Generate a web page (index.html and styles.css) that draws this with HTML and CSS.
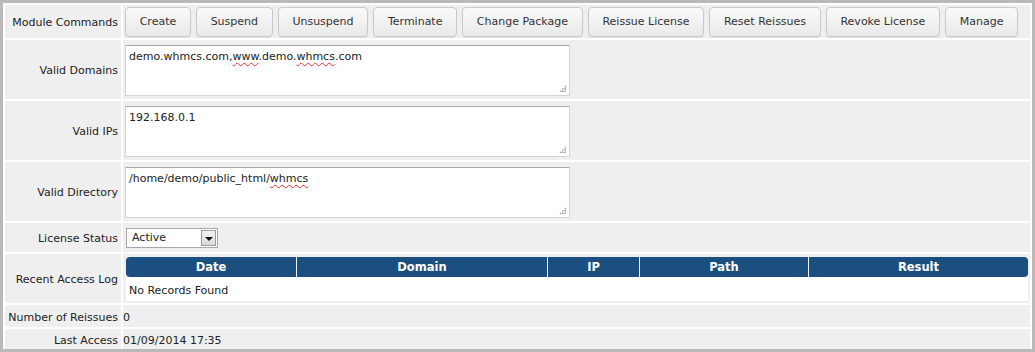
FILE: index.html
```html
<!DOCTYPE html>
<html lang="en">
<head>
  <meta charset="UTF-8" />
  <title>License Module</title>
  <link rel="stylesheet" href="styles.css">
</head>
<body>
  <div class="frame">
    <table class="form">
      <tr class="r-cmd">
        <td class="lbl">Module Commands</td>
        <td class="fld">
          <div class="cmds">
            <button>Create</button>
            <button>Suspend</button>
            <button>Unsuspend</button>
            <button>Terminate</button>
            <button>Change Package</button>
            <button>Reissue License</button>
            <button>Reset Reissues</button>
            <button>Revoke License</button>
            <button>Manage</button>
          </div>
        </td>
      </tr>
      <tr class="r-area">
        <td class="lbl">Valid Domains</td>
        <td class="fld"><div class="area">demo.whmcs.com,<span class="sp">www</span>.demo.<span class="sp">whmcs</span>.com<i class="grip"></i></div></td>
      </tr>
      <tr class="r-area">
        <td class="lbl">Valid IPs</td>
        <td class="fld"><div class="area">192.168.0.1<i class="grip"></i></div></td>
      </tr>
      <tr class="r-area">
        <td class="lbl">Valid Directory</td>
        <td class="fld"><div class="area">/home/demo/public_html/<span class="sp">whmcs</span><i class="grip"></i></div></td>
      </tr>
      <tr class="r-sel">
        <td class="lbl">License Status</td>
        <td class="fld">
          <div class="select"><span>Active</span><b class="arrow"></b></div>
        </td>
      </tr>
      <tr class="r-log">
        <td class="lbl">Recent Access Log</td>
        <td class="fld">
          <table class="log">
            <tr>
              <th class="c-date">Date</th>
              <th class="c-dom">Domain</th>
              <th class="c-ip">IP</th>
              <th class="c-path">Path</th>
              <th class="c-res">Result</th>
            </tr>
            <tr>
              <td colspan="5">No Records Found</td>
            </tr>
          </table>
        </td>
      </tr>
      <tr class="r-txt r-num">
        <td class="lbl">Number of Reissues</td>
        <td class="fld">0</td>
      </tr>
      <tr class="r-txt">
        <td class="lbl">Last Access</td>
        <td class="fld">01/09/2014 17:35</td>
      </tr>
    </table>
  </div>
</body>
</html>
```

FILE: styles.css
```css
body { margin: 0; font-family: "DejaVu Sans", Verdana, sans-serif; font-size: 11px; color: #222; background: #fff; }
.frame { width: 1035px; height: 352px; box-sizing: border-box; border: 3px solid #b9b9b9; overflow: hidden; background: #fff; }
.form { border-collapse: separate; border-spacing: 2px; width: 100%; }
.form td { background: #efefef; padding: 0; }
.lbl { width: 115px; text-align: right; padding-right: 3px !important; padding-top: 2px !important; white-space: nowrap; }
.fld { padding-left: 0; }

.r-cmd { height: 33px; }
.cmds { display: flex; gap: 5px; padding-left: 2px; }
.cmds button { height: 30px; padding: 0 13.7px; font-family: inherit; font-size: 11px; color: #333; background: linear-gradient(#fafafa, #e9e9e9); border: 1px solid #c9c9c9; border-radius: 4px; box-shadow: 0 1px 1px rgba(0,0,0,0.08); cursor: pointer; }

.r-area { height: 59px; }
.area { position: relative; width: 445px; height: 51px; box-sizing: border-box; margin-top: 2px; margin-left: 2px; padding: 4px 3px; background: #fff; border: 1px solid #d4d4d4; border-top-color: #a8a8a8; font-size: 11px; color: #222; }
.sp { text-decoration: underline wavy #e03030; text-decoration-thickness: 1px; text-underline-offset: 2px; }
.grip { position: absolute; right: 3px; bottom: 3px; width: 7px; height: 7px; background: radial-gradient(circle, #9a9a9a 0.8px, transparent 1px) 0 0 / 2.5px 2.5px; clip-path: polygon(100% 0, 100% 100%, 0 100%); }

.r-sel { height: 29px; }
.select { display: flex; align-items: center; justify-content: space-between; width: 92px; height: 20px; box-sizing: border-box; margin-left: 3px; border: 1px solid #a9a9a9; background: #fff; padding-left: 5px; }
.arrow { width: 15px; height: 16px; margin-right: 1px; box-sizing: border-box; border: 1px solid #9d9d9d; background: linear-gradient(#f4f4f4, #d9d9d9); position: relative; }
.arrow::after { content: ""; position: absolute; left: 3px; top: 6px; border-left: 4px solid transparent; border-right: 4px solid transparent; border-top: 4px solid #111; }

.r-log { height: 47px; }
.r-log td.fld { padding: 3px 1px 2px 2px; }
.log { width: 904px; border-collapse: separate; border-spacing: 1px 0; }
.log th { background: #1b4f7f; color: #fff; font-weight: bold; font-size: 11.5px; height: 20px; padding: 0; text-align: center; }
.log th.c-date { border-radius: 4px 0 0 4px; width: 170px; }
.log th.c-dom { width: 250px; }
.log th.c-ip { width: 91px; }
.log th.c-path { width: 168px; }
.log th.c-res { border-radius: 0 4px 4px 0; }
.log td { background: #fff !important; height: 22px; padding: 2px 3px 0 !important; }

.r-txt { height: 21px; }
.r-num { height: 22px; }
.r-txt td { padding-top: 2px; }
```
